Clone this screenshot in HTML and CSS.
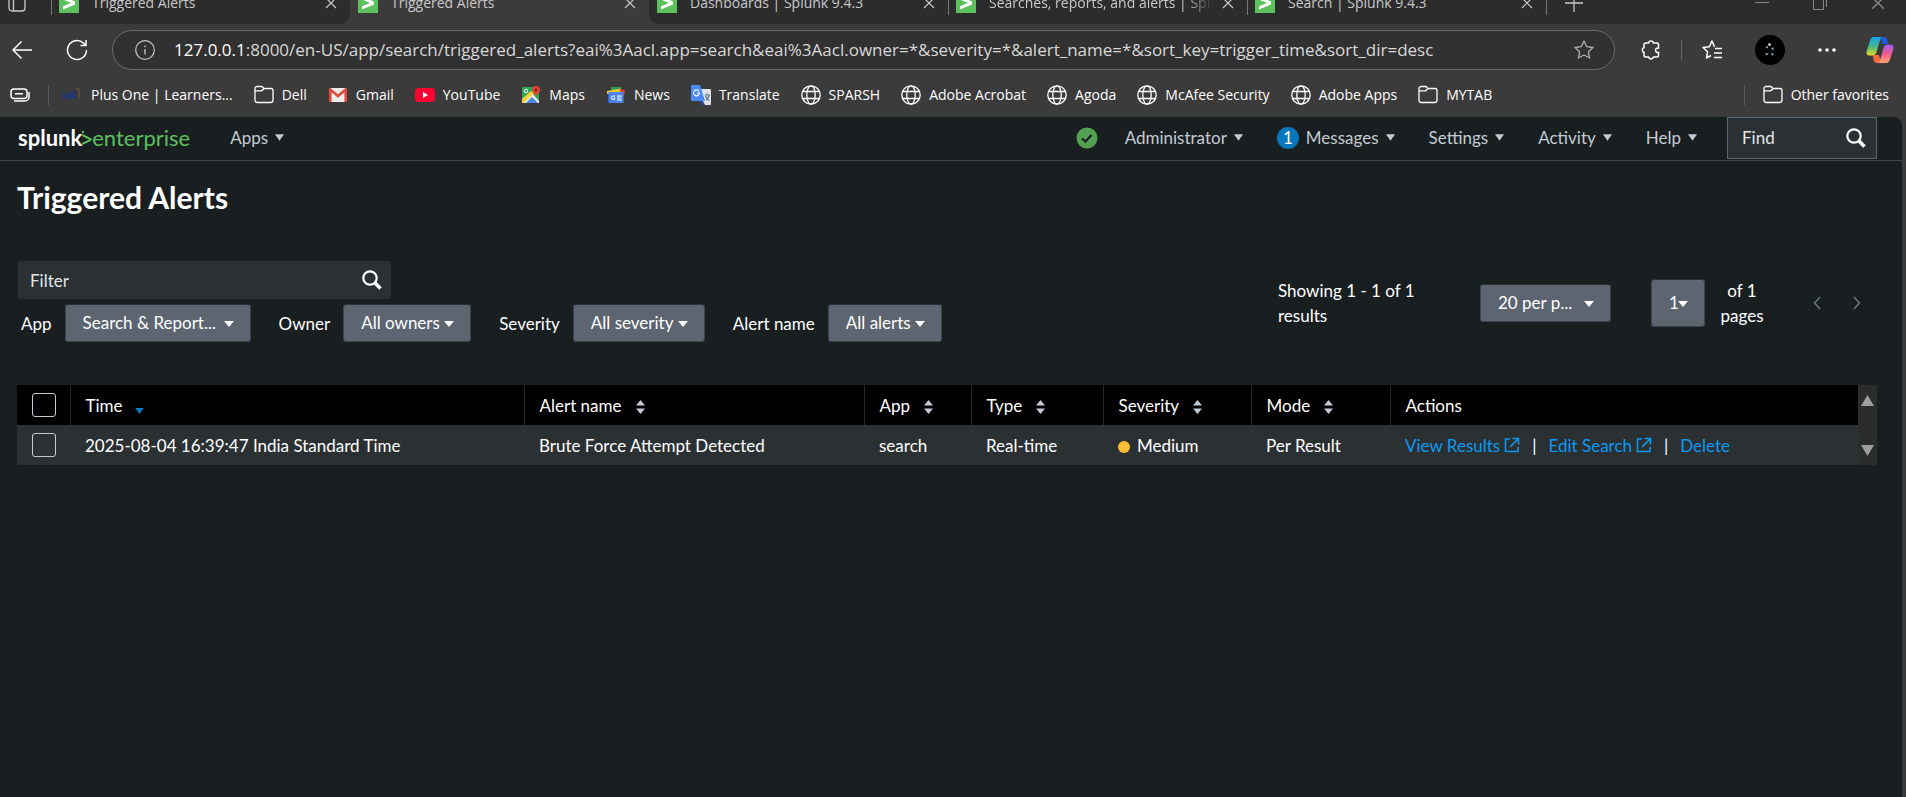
FILE: index.html
```html
<!DOCTYPE html>
<html lang="en">
<head>
<meta charset="utf-8">
<title>Triggered Alerts</title>
<link rel="stylesheet" href="styles.css">
</head>
<body>
<svg class="defs" aria-hidden="true">
  <symbol id="splunk" viewBox="0 0 20 20"><path fill="#5cc05c" d="M0 0h20v20H0z"/><path fill="#fff" d="M4 3l12 5.500v3L4 16.500v-3.200l8-3.300-8-3.500z"/></symbol>
  <symbol id="close" viewBox="0 0 12 12"><path d="M1 1l10 10M11 1L1 11" fill="none" stroke="currentColor" stroke-width="1.200"/></symbol>
  <symbol id="folder" viewBox="0 0 20 20"><path d="M1 14.500V3.500A2 2 0 0 1 3 1.500h4.500a2 2 0 0 1 1.500.8l1 1.200h7a2 2 0 0 1 2 2v9.500a2.500 2.500 0 0 1-2.500 2.500h-13A2.500 2.500 0 0 1 1 15zM1 5.800h6a2 2 0 0 0 1.600-.8L10 3.500" fill="none" stroke="currentColor" stroke-width="1.300"/></symbol>
  <symbol id="globe" viewBox="0 0 20 20"><g fill="none" stroke="currentColor" stroke-width="1.300"><circle cx="10" cy="10" r="9.200"/><ellipse cx="10" cy="10" rx="4.200" ry="9.200"/><path d="M1.600 6.500h16.800M1.600 13.500h16.800"/></g></symbol>
  <symbol id="search" viewBox="0 0 20 20"><circle cx="8" cy="8" r="6.700" fill="none" stroke="#fff" stroke-width="2.200"/><path d="M12.800 12.800l5.700 5.700" stroke="#fff" stroke-width="3.600"/></symbol>
  <symbol id="caret" viewBox="0 0 10 7"><path d="M0 0h10L5 7z" fill="currentColor"/></symbol>
  <symbol id="sort" viewBox="0 0 9 14"><path d="M0 5.500h9L4.500 0zM0 8.500h9L4.500 14z" fill="#c3cbd4"/></symbol>
  <symbol id="external" viewBox="0 0 16 16"><path d="M6 2H1.500v12.500H14V10M8.500 1.500h6v6M14.500 1.500L6 10" fill="none" stroke="currentColor" stroke-width="1.600"/></symbol>
</svg>

<header class="browser">
  <div class="tabstrip">
    <div class="tabgroup tabgroup-left">
      <button class="tabmenu" aria-label="Tab actions"><svg width="18" height="18" viewBox="0 0 18 18"><path d="M1 1h16v13a3 3 0 0 1-3 3H4a3 3 0 0 1-3-3zM5.500 1v16" fill="none" stroke="currentColor" stroke-width="1.300"/></svg></button>
      <div class="tab divided"><svg class="i20"><use href="#splunk"/></svg><span class="tab-title">Triggered Alerts</span><button aria-label="Close"><svg class="i12"><use href="#close"/></svg></button></div>
    </div>
    <div class="tab active"><svg class="i20"><use href="#splunk"/></svg><span class="tab-title">Triggered Alerts</span><button aria-label="Close"><svg class="i12"><use href="#close"/></svg></button></div>
    <div class="tabgroup tabgroup-right">
      <div class="tab"><svg class="i20"><use href="#splunk"/></svg><span class="tab-title">Dashboards | Splunk 9.4.3</span><button aria-label="Close"><svg class="i12"><use href="#close"/></svg></button></div>
      <div class="tab divided"><svg class="i20"><use href="#splunk"/></svg><span class="tab-title fade">Searches, reports, and alerts | Splunk 9.4.3</span><button aria-label="Close"><svg class="i12"><use href="#close"/></svg></button></div>
      <div class="tab divided"><svg class="i20"><use href="#splunk"/></svg><span class="tab-title">Search | Splunk 9.4.3</span><button aria-label="Close"><svg class="i12"><use href="#close"/></svg></button></div>
      <button class="newtab divided" aria-label="New tab"><svg width="18" height="18" viewBox="0 0 18 18"><path d="M9 0v18M0 9h18" stroke="currentColor" stroke-width="1.300"/></svg></button>
      <div class="windowbtns">
        <button aria-label="Minimize"><svg width="14" height="14" viewBox="0 0 14 14"><path d="M0 6.500h14" stroke="currentColor"/></svg></button>
        <button aria-label="Restore"><svg width="14" height="14" viewBox="0 0 14 14"><path d="M.5 3h10v10.500H.5zM3 .5h10.500V11" fill="none" stroke="currentColor"/></svg></button>
        <button aria-label="Close window"><svg class="i14"><use href="#close"/></svg></button>
      </div>
    </div>
  </div>

  <div class="toolbar">
    <button aria-label="Back"><svg width="20" height="20" viewBox="0 0 20 20"><path d="M20 10H1M9.500 1.500L1 10l8.500 8.500" fill="none" stroke="currentColor" stroke-width="1.500"/></svg></button>
    <button class="reload" aria-label="Refresh"><svg width="22" height="22" viewBox="0 0 22 22"><path d="M20.500 11A9.500 9.500 0 1 1 17.500 4.100L19.500 6.300M20 1v5.500h-5.500" fill="none" stroke="currentColor" stroke-width="1.500"/></svg></button>
    <div class="address">
      <svg width="20" height="20" viewBox="0 0 20 20"><circle cx="10" cy="10" r="9.300" fill="none" stroke="#c8c8c8" stroke-width="1.200"/><path d="M10 9v5.500M10 5.500v1.700" stroke="#c8c8c8" stroke-width="1.300"/></svg>
      <span class="url"><b>127.0.0.1</b>:8000/en-US/app/search/triggered_alerts?eai%3Aacl.app=search&amp;eai%3Aacl.owner=*&amp;severity=*&amp;alert_name=*&amp;sort_key=trigger_time&amp;sort_dir=desc</span>
      <button class="favstar" aria-label="Add to favorites"><svg width="20" height="20" viewBox="0 0 20 20"><path d="M10 1l2.700 5.700 6.300.8-4.600 4.300 1.200 6.200L10 15l-5.600 3 1.200-6.200L1 7.500l6.300-.8z" fill="none" stroke="#b0b0b0" stroke-width="1.300" stroke-linejoin="round"/></svg></button>
    </div>
    <div class="tools">
      <button aria-label="Extensions"><svg width="20" height="20" viewBox="0 0 20 20"><path d="M4 3h3.500a2.600 2.600 0 0 1 5 0H16a1.500 1.500 0 0 1 1.500 1.500V8a2.300 2.300 0 1 0 0 4.400v3.100A1.500 1.500 0 0 1 16 17h-3.500a2.600 2.600 0 0 1-5 0H4.500A1.500 1.500 0 0 1 3 15.500v-3a2.700 2.700 0 0 1 0-5v-3A1.500 1.500 0 0 1 4.500 3" fill="none" stroke="currentColor" stroke-width="1.500"/></svg></button>
      <i class="rule"></i>
      <button aria-label="Favorites"><svg width="20" height="20" viewBox="0 0 20 20"><path d="M12.500 6.700L10 1 7.300 6.700 1 7.500l4.600 4.300L4.400 18 9 15.500M13 8.500h7M12 13h8M12 17.500h8" fill="none" stroke="currentColor" stroke-width="1.500" stroke-linejoin="round"/></svg></button>
      <button aria-label="Profile"><svg width="30" height="30" viewBox="0 0 30 30"><circle cx="15" cy="15" r="15" fill="#000"/><g fill="#a9c8d8"><circle cx="14.500" cy="9.500" r="1.500"/><path d="M10 12l3-1v2.500zM16 13l3-.5-1 3zM10 18l4 .5-2.500 2zM16 17.500l3 1.500-2 2z" opacity=".8"/></g></svg></button>
      <button aria-label="Settings and more"><svg width="18" height="4" viewBox="0 0 18 4"><g fill="currentColor"><circle cx="2" cy="2" r="1.800"/><circle cx="9" cy="2" r="1.800"/><circle cx="16" cy="2" r="1.800"/></g></svg></button>
      <button aria-label="Copilot"><svg width="28" height="26" viewBox="0 0 28 26"><defs><linearGradient id="g1" x2="0" y2="1"><stop stop-color="#17a5ee"/><stop offset=".5" stop-color="#3fb58a"/><stop offset="1" stop-color="#e9dc1a"/></linearGradient><linearGradient id="g2" x2="0" y2="1"><stop stop-color="#a15cf0"/><stop offset=".5" stop-color="#f05a90"/><stop offset="1" stop-color="#ffa36a"/></linearGradient></defs><path d="M14 0h4c2 0 3 1 3.500 3l1 4h-6z" fill="#1d5bd8"/><path d="M7 18h6l2 8h-4c-2 0-3-1-3.500-3z" fill="#f4683c"/><path d="M8 0h9c-2 0-2.500 1-3 3l-3.500 12c-.6 2-2 3.500-4 3.500H3.500C1 18.500 0 16.500.7 14L4 3.500C4.600 1.500 6 0 8 0z" fill="url(#g1)"/><path d="M20 26h-9c2 0 2.500-1 3-3l3.500-12c.6-2 2-3.500 4-3.500h3c2.500 0 3.500 2 2.800 4.500L24 22.500c-.6 2-2 3.500-4 3.500z" fill="url(#g2)"/></svg></button>
    </div>
  </div>

  <nav class="bookmarks">
    <button class="workspaces" aria-label="Workspaces"><svg width="20" height="14" viewBox="0 0 20 14"><g fill="none" stroke="currentColor" stroke-width="1.500"><rect x="1" y="1" width="16" height="9.500" rx="3"/><path d="M4 13h11a4 4 0 0 0 4-4V4M5 5.800h8"/></g></svg></button>
    <a href="#"><svg width="20" height="18" viewBox="0 0 20 18"><path d="M1 6v6h3V8h2v4h2V7h2v5h2V6h2" fill="none" stroke="#24386b" stroke-width="2"/><path d="M13 3h3v9" fill="none" stroke="#6b4b34" stroke-width="1.500"/></svg>Plus One | Learners...</a>
    <a href="#"><svg class="i20"><use href="#folder"/></svg>Dell</a>
    <a href="#"><svg width="20" height="14" viewBox="-1 0 20 14"><path d="M0 0h18v14H0z" fill="#ececec"/><path d="M1.300 14V1.500L9 8l7.700-6.500V14" fill="none" stroke="#dd4b3e" stroke-width="2.600"/></svg>Gmail</a>
    <a href="#"><svg width="20" height="14" viewBox="0 0 20 14"><rect width="20" height="14" rx="3.500" fill="#ff0033"/><path d="M8 4l5 3-5 3z" fill="#fff"/></svg>YouTube</a>
    <a href="#"><svg width="20" height="18" viewBox="-1 0 20 18"><path d="M0 1h12l5 6v10H0z" fill="#2fa455"/><path d="M0 17L10 7l7 8v2z" fill="#e9ebee"/><path d="M4 17l6-6 6 6z" fill="#4a86e8"/><path d="M0 13l9-8 3 2L2 17H0z" fill="#f9cf3b"/><circle cx="4" cy="5" r="1.800" fill="none" stroke="#fff"/><path d="M14 11c0-3-4-4-4-7a4 4 0 0 1 8 0c0 3-4 4-4 7z" fill="#e3443a"/><circle cx="14" cy="4" r="1.400" fill="#7d1e19"/></svg>Maps</a>
    <a href="#"><svg width="20" height="16" viewBox="-1 0 20 16"><path d="M4 0h10v5H4z" fill="#2f9e52"/><path d="M0 4l14-2.500V7H0z" fill="#f7c62f"/><path d="M13 2l5 1.500-1 5h-4z" fill="#e3443a"/><path d="M1.500 5h15v11h-15z" fill="#4a83ea"/><path d="M8 9H6.500A1.800 1.800 0 1 0 8 11H6.500M10 9h5M10 11h4M10 13h5" fill="none" stroke="#fff"/></svg>News</a>
    <a href="#"><svg width="20" height="20" viewBox="0 0 20 20"><path d="M8 4h11a1 1 0 0 1 1 1v14a1 1 0 0 1-1 1h-7z" fill="#dfe1e4"/><path d="M12 16l2 4h-3l-2-4z" fill="#2c49a8"/><path d="M1 0h8l5 16H1a1 1 0 0 1-1-1V1a1 1 0 0 1 1-1z" fill="#4b8bf5"/><path d="M8 6.200A3 3 0 1 0 8.500 8H6" fill="none" stroke="#fff" stroke-width="1.200"/><path d="M13.800 10H19M16 8.500V10M18 10c0 2-1.500 4-3 5M14.500 11c.5 2 2 3.500 4 4.500" fill="none" stroke="#5d7f8c" stroke-width="1.200"/></svg>Translate</a>
    <a href="#"><svg class="i20"><use href="#globe"/></svg>SPARSH</a>
    <a href="#"><svg class="i20"><use href="#globe"/></svg>Adobe Acrobat</a>
    <a href="#"><svg class="i20"><use href="#globe"/></svg>Agoda</a>
    <a href="#"><svg class="i20"><use href="#globe"/></svg>McAfee Security</a>
    <a href="#"><svg class="i20"><use href="#globe"/></svg>Adobe Apps</a>
    <a href="#"><svg class="i20"><use href="#folder"/></svg>MYTAB</a>
    <a class="other" href="#"><svg class="i20"><use href="#folder"/></svg>Other favorites</a>
  </nav>
</header>

<div class="page">
  <header class="appbar">
    <a class="logo" href="#"><b>splunk</b><svg width="10" height="16" viewBox="0 0 10 16"><path d="M0 5l8.500 4.200v.6L0 14" fill="none" stroke="#5cc05c" stroke-width="2"/><path d="M0 2h2" stroke="#5cc05c" stroke-width="2"/></svg>enterprise</a>
    <button class="menu apps">Apps<svg class="caret"><use href="#caret"/></svg></button>
    <nav class="account">
      <button class="health" aria-label="Health status"><svg width="22" height="22" viewBox="0 0 22 22"><circle cx="11" cy="11" r="10.500" fill="#53a051"/><path d="M6 11.500l3.500 3 6-6.500" fill="none" stroke="#171d21" stroke-width="2.200"/></svg></button>
      <button class="menu">Administrator<svg class="caret"><use href="#caret"/></svg></button>
      <button class="menu"><span class="badge">1</span>Messages<svg class="caret"><use href="#caret"/></svg></button>
      <button class="menu">Settings<svg class="caret"><use href="#caret"/></svg></button>
      <button class="menu">Activity<svg class="caret"><use href="#caret"/></svg></button>
      <button class="menu">Help<svg class="caret"><use href="#caret"/></svg></button>
    </nav>
    <label class="find"><input type="text" placeholder="Find" aria-label="Find"><svg class="i20"><use href="#search"/></svg></label>
  </header>

  <main>
    <h1>Triggered Alerts</h1>
    <div class="controls">
      <div>
        <label class="filter"><input type="text" placeholder="Filter" aria-label="Filter"><svg class="i20"><use href="#search"/></svg></label>
        <div class="pickers">
          <label for="app">App</label><span class="picker w-app"><select id="app"><option>Search &amp; Report...</option></select></span>
          <label for="owner">Owner</label><span class="picker w-owner"><select id="owner"><option>All owners</option></select></span>
          <label for="severity">Severity</label><span class="picker w-severity"><select id="severity"><option>All severity</option></select></span>
          <label for="alert">Alert name</label><span class="picker w-alert"><select id="alert"><option>All alerts</option></select></span>
        </div>
      </div>
      <div class="paging">
        <p class="showing">Showing 1 - 1 of 1 results</p>
        <span class="picker w-count"><select aria-label="Results per page"><option>20 per p...</option></select></span>
        <span class="picker w-page"><select aria-label="Page"><option>1</option></select></span>
        <p class="of">of 1 pages</p>
        <button aria-label="Previous page"><svg width="8" height="14" viewBox="0 0 8 14"><path d="M7 1L1.500 7 7 13" fill="none" stroke="currentColor" stroke-width="1.500"/></svg></button>
        <button aria-label="Next page"><svg width="8" height="14" viewBox="0 0 8 14"><path d="M1 1l5.500 6L1 13" fill="none" stroke="currentColor" stroke-width="1.500"/></svg></button>
      </div>
    </div>

    <div class="results">
      <table>
        <colgroup><col class="c-check"><col class="c-time"><col class="c-name"><col class="c-app"><col class="c-type"><col class="c-sev"><col class="c-mode"><col></colgroup>
        <thead><tr>
          <th><input type="checkbox" aria-label="Select all"></th>
          <th>Time<svg class="sorted" width="9" height="6" viewBox="0 0 10 7"><path d="M0 0h10L5 7z" fill="currentColor"/></svg></th>
          <th>Alert name<svg class="sort"><use href="#sort"/></svg></th>
          <th>App<svg class="sort"><use href="#sort"/></svg></th>
          <th>Type<svg class="sort"><use href="#sort"/></svg></th>
          <th>Severity<svg class="sort"><use href="#sort"/></svg></th>
          <th>Mode<svg class="sort"><use href="#sort"/></svg></th>
          <th>Actions</th>
        </tr></thead>
        <tbody><tr>
          <td><input type="checkbox" aria-label="Select alert"></td>
          <td>2025-08-04 16:39:47 India Standard Time</td>
          <td>Brute Force Attempt Detected</td>
          <td>search</td>
          <td>Real-time</td>
          <td><i class="dot"></i>Medium</td>
          <td>Per Result</td>
          <td><span class="actions"><a href="#">View Results<svg class="i16"><use href="#external"/></svg></a><span>|</span><a href="#">Edit Search<svg class="i16"><use href="#external"/></svg></a><span>|</span><a href="#">Delete</a></span></td>
        </tr></tbody>
      </table>
      <div class="scroller" aria-hidden="true"><svg width="13" height="11" viewBox="0 0 13 11"><path d="M6.500 0L13 11H0z" fill="#9f9f9f"/></svg><svg width="13" height="11" viewBox="0 0 13 11"><path d="M6.500 11L13 0H0z" fill="#9f9f9f"/></svg></div>
    </div>
  </main>
</div>
</body>
</html>
```

FILE: styles.css
```css
* { box-sizing: border-box; }
body {
  margin: 0;
  min-height: 100vh;
  display: flex;
  flex-direction: column;
  background: #3b3b3b;
  color: #fff;
  font: 17px/25px Lato, "Open Sans", sans-serif;
}
button {
  display: flex;
  align-items: center;
  justify-content: center;
  padding: 0;
  border: 0;
  background: none;
  color: inherit;
  font: inherit;
}
a { color: inherit; text-decoration: none; }
svg { flex: none; }
.defs { position: absolute; width: 0; height: 0; }
.i12 { width: 12px; height: 12px; }
.i14 { width: 14px; height: 14px; }
.i16 { width: 16px; height: 16px; }
.i20 { width: 20px; height: 20px; }

/* Browser chrome */
.browser { font: 14px/20px "Open Sans", sans-serif; }
.tabstrip {
  display: flex;
  align-items: flex-end;
  height: 24px;
  overflow: hidden;
  color: #c9c9c9;
}
.tabgroup { display: flex; background: #2c2c2c; }
.tabgroup-left { border-bottom-right-radius: 10px; }
.tabgroup-right { flex: 1; border-bottom-left-radius: 10px; }
.tabmenu { width: 51px; padding-right: 17px; }
.tab {
  display: flex;
  align-items: center;
  width: 299px;
  height: 42px;
  padding: 0 13px 0 7px;
  border-left: 1px solid transparent;
}
.divided { border-left: 1px solid; border-image: linear-gradient(#777 32px, transparent 32px) 1; }
.tab-title { flex: 1; margin: 0 9px 0 13px; overflow: hidden; white-space: nowrap; }
.fade { mask-image: linear-gradient(90deg, #000 88%, transparent); }
.newtab { width: 54px; border-width: 0 0 0 1px; }
.tabgroup-right .newtab { border-left: 1px solid; }
.windowbtns { display: flex; gap: 44px; margin-left: auto; padding-right: 21px; color: #888; }

.toolbar { display: flex; align-items: center; height: 52px; padding: 0 12px; }
.reload { margin-left: 34px; }
.address {
  flex: 1;
  display: flex;
  align-items: center;
  gap: 19px;
  height: 40px;
  margin-left: 24px;
  padding: 0 20px 0 22px;
  border: 1px solid #6c6c6c;
  border-radius: 20px;
  background: #313131;
}
.url { flex: 1; font-size: 17px; color: #d8d8d8; white-space: nowrap; }
.url b { font-weight: 400; color: #fff; }
.tools { display: flex; align-items: center; gap: 20px; margin-left: 26px; }
.tools button:nth-child(4) { margin-left: 13px; }
.tools button:nth-child(5) { margin: 0 10px 0 13px; }
.rule { width: 1px; height: 20px; background: #666; }

.bookmarks { display: flex; align-items: center; gap: 21px; height: 41px; padding: 0 17px 4px 10px; }
.bookmarks a { display: flex; align-items: center; gap: 8px; white-space: nowrap; }
.workspaces { height: 20px; padding-right: 18px; border-right: 1px solid #5e5e5e; margin-right: -7px; }
.bookmarks .other { margin-left: auto; padding-left: 18px; border-left: 1px solid #5e5e5e; }

/* Splunk page */
.page { flex: 1; margin-right: 4px; background: #191e21; border-top-right-radius: 8px; }
.appbar {
  display: flex;
  align-items: center;
  height: 44px;
  padding: 0 25px 2px 18px;
  border-bottom: 1px solid #3c444d;
  color: #c3cbd4;
  font-size: 17px;
}
.logo { display: flex; align-items: center; font-size: 22px; color: #5cc05c; }
.logo b { color: #fff; font-weight: 700; }
.menu { gap: 7px; }
.apps { margin-left: 40px; }
.caret { width: 9px; height: 7px; }
.account { display: flex; gap: 34px; margin-left: auto; }
.health { margin-right: -7px; }
.badge { width: 22px; height: 22px; border-radius: 50%; background: #0877bd; color: #fff; line-height: 22px; }
.find, .filter { display: flex; align-items: center; background: #2b3033; }
.find { width: 150px; height: 42px; margin-left: 30px; padding: 0 10px 0 14px; border: 1px solid #5c6773; }
.filter { width: 373px; height: 38px; padding: 0 9px 0 12px; border-radius: 3px; }
.find input, .filter input { flex: 1; min-width: 0; padding: 0; border: 0; background: none; color: #fff; font: inherit; }
input::placeholder { color: #e1e4e8; opacity: 1; }

main { padding: 18px 25px 0 17px; }
h1 { margin: 0; font-size: 30px; line-height: 36px; font-weight: 700; }
.controls { display: flex; justify-content: space-between; margin-top: 46px; padding-left: 1px; }
.pickers { display: flex; align-items: center; margin-top: 5px; padding-left: 3px; }
.pickers label { margin-right: 13px; }
.pickers .picker { margin-right: 28px; }
.picker { position: relative; display: flex; height: 38px; }
.picker::after {
  content: "";
  position: absolute;
  right: 17px;
  top: calc(50% - 2px);
  border: 5px solid transparent;
  border-top: 6px solid #fff;
  border-bottom: 0;
  pointer-events: none;
}
select {
  appearance: none;
  width: 100%;
  height: 100%;
  padding: 0 0 2px 17px;
  border: 1px solid #3c444d;
  border-top-color: #2b3033;
  border-radius: 3px;
  background: #5c6570;
  color: #fff;
  font: inherit;
}
.w-app { width: 186px; }
.w-owner { width: 128px; }
.w-severity { width: 132px; }
.w-alert { width: 114px; }
.w-count { width: 131px; margin-right: 40px; }
.w-page { width: 54px; height: 48px; }
.paging { display: flex; align-items: center; height: 84px; padding-right: 16px; }
.paging p { margin: 0; }
.paging .showing { width: 140px; margin-right: 62px; }
.paging .of { width: 50px; margin: 0 46px 0 12px; text-align: center; }
.paging button { color: #6b7785; }
.paging button + button { margin-left: 32px; }

.results { display: flex; margin-top: 40px; }
table { flex: 1; table-layout: fixed; border-collapse: collapse; background: #2b3033; }
th, td { height: 40px; padding: 0 0 0 15px; font-weight: 400; text-align: left; white-space: nowrap; }
th { background: #000; border-left: 1px solid #272b2e; }
th:first-child { border-left: 0; }
.c-check { width: 53px; }
.c-time { width: 454px; }
.c-name { width: 340px; }
.c-app { width: 107px; }
.c-type { width: 132px; }
.c-sev { width: 148px; }
.c-mode { width: 139px; }
input[type="checkbox"] {
  appearance: none;
  display: block;
  width: 24px;
  height: 24px;
  margin: 0;
  border: 1px solid #c3cbd4;
  border-radius: 3px;
}
.sort { width: 9px; height: 14px; margin-left: 14px; vertical-align: -2px; }
.sorted { margin-left: 12px; vertical-align: -2px; color: #0877bd; }
.dot { display: inline-block; width: 12px; height: 12px; margin-right: 7px; border-radius: 50%; background: #f8be34; vertical-align: -1px; }
.actions { display: flex; align-items: center; gap: 12px; }
.actions a { display: flex; align-items: center; gap: 4px; color: #0d99f2; }
.scroller { display: flex; flex-direction: column; align-items: center; justify-content: space-between; width: 19px; padding: 10px 0 9px; background: #2c2c2c; }
```
